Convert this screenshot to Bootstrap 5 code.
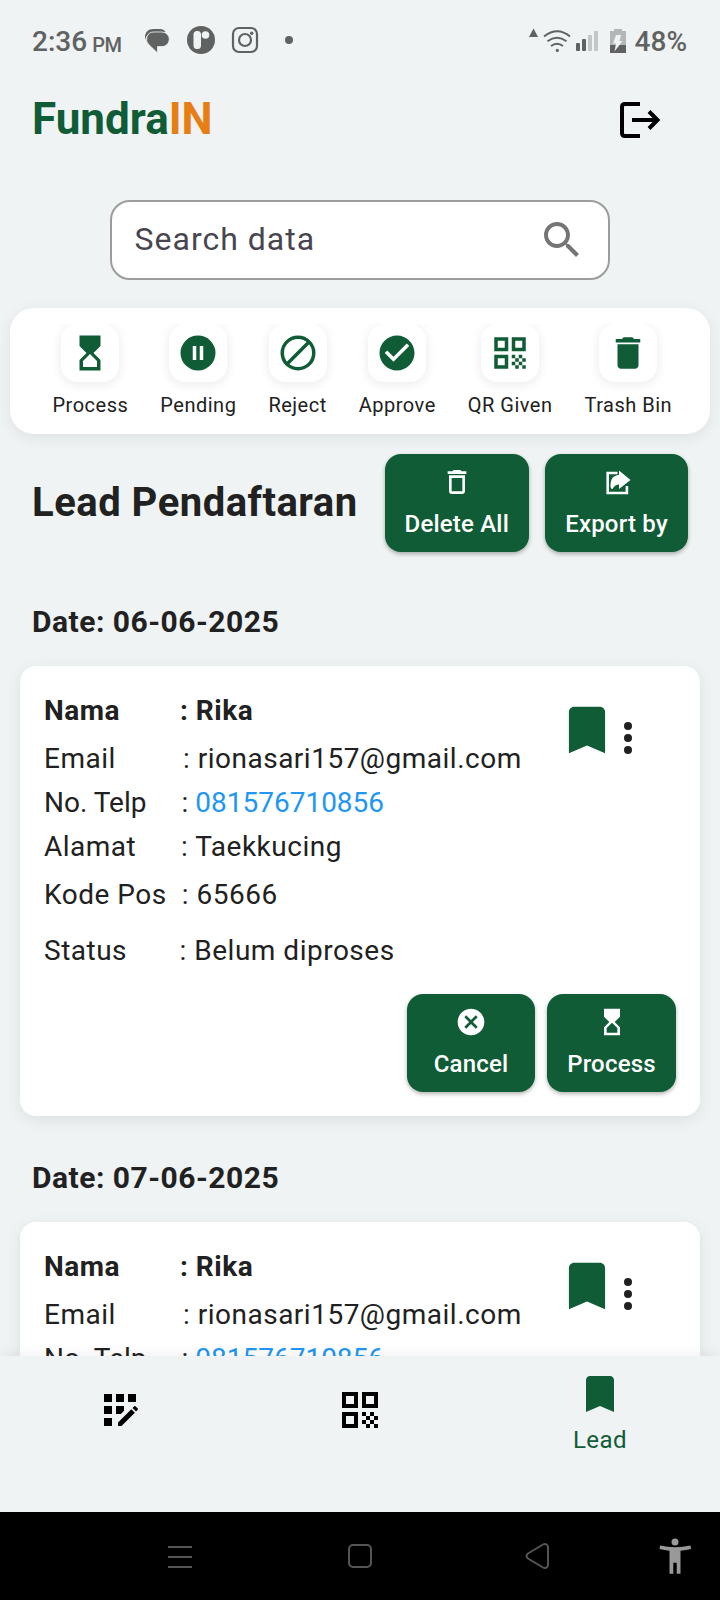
<!DOCTYPE html>
<html lang="id">
<head>
<meta charset="utf-8">
<meta name="viewport" content="width=device-width, initial-scale=1">
<title>FundraIN</title>
<link href="https://cdn.jsdelivr.net/npm/bootstrap@5.3.0/dist/css/bootstrap.min.css" rel="stylesheet">
<style>
  :root { --brand: #0f5c36; --page: #eff3f4; --ink: #212121; }
  body { width: 720px; height: 1600px; background: var(--page); color: var(--ink); font-family: Roboto, sans-serif; overflow: hidden; }
  svg { display: block; flex: none; }
  .phone-main { height: 1356px; }
  .status-line { height: 80px; padding: 2px 33px 0 32px; color: #606261; font-size: 28px; font-weight: 500; }
  .status-line span { padding-top: 2px; }
  .status-line .meridiem { font-size: 20px; margin-left: 5px; letter-spacing: -.3px; padding-top: 8px; }
  .app-head { height: 80px; padding: 0 56px 0 32px; }
  .brand-name { font-size: 44px; font-weight: 700; line-height: 78px; padding-bottom: 2px; color: var(--brand); }
  .brand-name span { color: #e67e14; }
  .search-box { width: 500px; height: 80px; margin: 40px auto 0; border: 2px solid #9b9c9c; border-radius: 20px; padding: 0 22px 0 22.5px; font-size: 32px; letter-spacing: 1px; color: #49454f; }
  .search-box span { padding-bottom: 2px; }
  .filter-bar { margin: 28px 10px 0; height: 126px; border-radius: 24px; padding-top: 16px; box-shadow: 0 4px 16px rgba(0,0,0,.07); }
  .filter-row { gap: 32px; padding-left: 42.5px; height: 110px; overflow: hidden; }
  .filter-row .tile { width: 58px; height: 58px; border-radius: 16px; box-shadow: 0 2px 12px rgba(0,0,0,.09); color: var(--brand); }
  .filter-row .tile-label { font-size: 20px; line-height: 30px; margin-top: 8px; letter-spacing: .5px; white-space: nowrap; }
  .title-row { margin: 20px 32px 0; height: 98px; }
  .title-row h1 { font-size: 40px; font-weight: 700; line-height: 98px; letter-spacing: .5px; white-space: nowrap; }
  .act { background: var(--brand); color: #fff; height: 98px; border: 0; border-radius: 16px; padding: 12px 0 14px; font-size: 24px; font-weight: 500; line-height: 28px; letter-spacing: .2px; box-shadow: 0 2px 4px rgba(0,0,0,.3); }
  .date-head { font-size: 30px; font-weight: 700; line-height: 40px; letter-spacing: .5px; margin: 0 32px 24px; }
  .lead-card { margin: 0 20px; height: 450px; padding: 25px 24px 24px; border-radius: 16px; box-shadow: 0 4px 16px rgba(0,0,0,.08); }
  .field { font-size: 28px; line-height: 40px; letter-spacing: .5px; white-space: nowrap; }
  .field dt { font-weight: inherit; width: 136px; flex: none; }
  .field dd { margin: 0; }
  .field a { color: #2196f3; text-decoration: none; }
  .field.phone { letter-spacing: 0; }
  .marks { margin: 8px 24px 0 0; }
  .card-actions { gap: 12px; margin-top: 23px; }
  .tab-bar { height: 156px; background: var(--page); color: #000; box-shadow: 0 -2px 12px rgba(0,0,0,.06); position: relative; }
  .tab-bar .tab { width: 240px; }
  .sys-bar { height: 88px; background: #000; }
</style>
</head>
<body>
<svg width="0" height="0" class="position-absolute">
  <defs>
    <symbol id="hourglass" viewBox="0 0 24 24"><path fill="currentColor" d="M18 22l-.01-6L14 12l3.990-4.010L18 2H6v6l4 4-4 3.990V22h12zM8 16.500l4-4 4 4V20H8v-3.500z"/></symbol>
    <symbol id="pause" viewBox="0 0 24 24"><path fill="currentColor" d="M12 2a10 10 0 100 20 10 10 0 000-20zm-1 14H9V8h2v8zm4 0h-2V8h2v8z"/></symbol>
    <symbol id="reject" viewBox="0 0 24 24"><g fill="none" stroke="currentColor" stroke-width="2"><circle cx="12" cy="12" r="9"/><path d="M5.600 18.400L18.400 5.600"/></g></symbol>
    <symbol id="check" viewBox="0 0 24 24"><path fill="currentColor" d="M12 2C6.480 2 2 6.480 2 12s4.480 10 10 10 10-4.480 10-10S17.520 2 12 2zm-2 15l-5-5 1.410-1.410L10 14.170l7.590-7.590L19 8l-9 9z"/></symbol>
    <symbol id="qr" viewBox="0 0 24 24"><path fill="currentColor" d="M3 11h8V3H3v8zm2-6h4v4H5V5zM3 21h8v-8H3v8zm2-6h4v4H5v-4zM13 3v8h8V3h-8zm6 6h-4V5h4v4zM19 19h2v2h-2zM13 13h2v2h-2zM15 15h2v2h-2zM13 17h2v2h-2zM15 19h2v2h-2zM17 17h2v2h-2zM17 13h2v2h-2zM19 15h2v2h-2z"/></symbol>
    <symbol id="trash" viewBox="0 0 24 24"><path fill="currentColor" d="M6 19c0 1.100.9 2 2 2h8c1.100 0 2-.9 2-2V7H6v12zM19 4h-3.500l-1-1h-5l-1 1H5v2h14V4z"/></symbol>
    <symbol id="trash-line" viewBox="0 0 24 24"><path fill="currentColor" d="M6 19c0 1.100.9 2 2 2h8c1.100 0 2-.9 2-2V7H6v12zM8 9h8v10H8V9zm7.500-5l-1-1h-5l-1 1H5v2h14V4h-3.500z"/></symbol>
    <symbol id="cancel" viewBox="0 0 24 24"><path fill="currentColor" d="M12 2C6.470 2 2 6.470 2 12s4.470 10 10 10 10-4.470 10-10S17.530 2 12 2zm5 13.590L15.590 17 12 13.410 8.410 17 7 15.590 10.590 12 7 8.410 8.410 7 12 10.590 15.590 7 17 8.410 13.410 12 17 15.590z"/></symbol>
    <symbol id="bookmark" viewBox="0 0 24 24"><path fill="currentColor" d="M17 3H7c-1.100 0-2 .9-2 2v16l7-3 7 3V5c0-1.100-.9-2-2-2z"/></symbol>
    <symbol id="dots" viewBox="0 0 24 24"><g fill="currentColor"><circle cx="12" cy="6" r="2"/><circle cx="12" cy="12" r="2"/><circle cx="12" cy="18" r="2"/></g></symbol>
  </defs>
</svg>

<main class="phone-main overflow-hidden">
  <div class="status-line d-flex align-items-center">
    <span>2:36</span><span class="meridiem">PM</span>
    <svg width="152" height="30" viewBox="0 0 152 30" style="margin-left:23.500px">
      <path fill="#606261" d="M0 14V11C0 6 3.500 3 8 3h7c2.500 0 4.500 1 5.500 3H10c-5 0-8.500 2.500-10 8z"/>
      <path fill="#606261" stroke="#eff3f4" stroke-width=".8" d="M9 6h8a7.300 7.300 0 0 1 0 14.600h-4.500V27L4 18.800A7.300 7.300 0 0 1 9 6z"/>
      <circle cx="56" cy="14" r="14" fill="#606261"/>
      <rect x="48.500" y="5" width="7.500" height="18" rx="3.500" fill="#eff3f4"/><circle cx="60.500" cy="9" r="3.800" fill="#eff3f4"/>
      <g fill="none" stroke="#606261" stroke-width="2.200"><rect x="88" y="2" width="24" height="24" rx="6"/><circle cx="100" cy="14" r="6"/></g><circle cx="106.700" cy="7.300" r="1.700" fill="#606261"/>
      <circle cx="144" cy="14" r="4" fill="#606261"/>
    </svg>
    <svg class="ms-auto" width="100" height="28" viewBox="529 26 100 28">
      <path fill="#606261" d="M534.500 27.500l4.500 8.500h-9z"/>
      <g fill="none" stroke="#606261" stroke-width="2"><path d="M545 35.500q13.500-10.500 26 0"/><path d="M548.500 40.200q9.500-7 19 0"/><path d="M552 45q6-4.600 12 0"/></g><circle cx="558.300" cy="49.400" r="1.600" fill="#606261"/>
      <g fill="#606261"><rect x="577" y="42" width="4" height="8" rx="1"/><rect x="583" y="38" width="4" height="12" rx="1"/></g>
      <g fill="#c4c7c8"><rect x="589" y="34" width="4" height="16"/><rect x="595" y="30" width="4" height="20"/></g>
      <path fill="#b4b7b8" d="M615 28h8v2h4v14h-16V30h4z"/><path fill="#606261" d="M611 44h16v8h-16z"/><path fill="#eff3f4" d="M617 34h5l-1.500 6h3l-8 10.500 1.500-8h-3z"/>
    </svg>
    <span style="margin-left:7px">48%</span>
  </div>

  <header class="app-head d-flex justify-content-between align-items-center">
    <div class="brand-name">Fundra<span>IN</span></div>
    <svg width="48" height="48" viewBox="616 96 48 48" fill="none" stroke="#000" stroke-width="4"><path d="M640 104h-15q-3 0-3 3v26q0 3 3 3h15M632 120h25M649 111.500l8.500 8.500-8.500 8.500"/></svg>
  </header>

  <div class="search-box bg-white d-flex justify-content-between align-items-center">
    <span>Search data</span>
    <svg width="48" height="48" viewBox="0 0 24 24"><path fill="#757575" d="M15.500 14h-.79l-.28-.27C15.410 12.590 16 11.110 16 9.500 16 5.910 13.090 3 9.500 3S3 5.910 3 9.500 5.910 16 9.500 16c1.610 0 3.090-.59 4.230-1.570l.27.28v.79l5 4.990L20.490 19l-4.990-5zm-6 0C7.010 14 5 11.990 5 9.500S7.010 5 9.500 5 14 7.010 14 9.500 11.990 14 9.500 14z"/></svg>
  </div>

  <nav class="filter-bar bg-white">
    <div class="filter-row d-flex">
      <div class="d-flex flex-column align-items-center"><div class="tile bg-white d-flex align-items-center justify-content-center"><svg width="42" height="42"><use href="#hourglass"/></svg></div><div class="tile-label">Process</div></div>
      <div class="d-flex flex-column align-items-center"><div class="tile bg-white d-flex align-items-center justify-content-center"><svg width="42" height="42"><use href="#pause"/></svg></div><div class="tile-label">Pending</div></div>
      <div class="d-flex flex-column align-items-center"><div class="tile bg-white d-flex align-items-center justify-content-center"><svg width="42" height="42"><use href="#reject"/></svg></div><div class="tile-label">Reject</div></div>
      <div class="d-flex flex-column align-items-center"><div class="tile bg-white d-flex align-items-center justify-content-center"><svg width="42" height="42"><use href="#check"/></svg></div><div class="tile-label">Approve</div></div>
      <div class="d-flex flex-column align-items-center"><div class="tile bg-white d-flex align-items-center justify-content-center"><svg width="42" height="42"><use href="#qr"/></svg></div><div class="tile-label">QR Given</div></div>
      <div class="d-flex flex-column align-items-center"><div class="tile bg-white d-flex align-items-center justify-content-center"><svg width="42" height="42"><use href="#trash"/></svg></div><div class="tile-label">Trash Bin</div></div>
    </div>
  </nav>

  <section class="title-row d-flex justify-content-between">
    <h1 class="m-0">Lead Pendaftaran</h1>
    <div class="d-flex gap-3">
      <button class="act d-flex flex-column align-items-center justify-content-between" style="width:144.500px"><svg width="32" height="32"><use href="#trash-line"/></svg>Delete All</button>
      <button class="act d-flex flex-column align-items-center justify-content-between" style="width:143px"><svg width="32" height="32" viewBox="0 0 32 32"><path fill="none" stroke="#fff" stroke-width="2.600" d="M16.500 7H6.700v20h19.200V20"/><path fill="#fff" d="M18 4.500L29.500 14 18 23v-4.500c-2.500 0-4.500 1-6.500 4.500-1.500 0-2-1-2-3C9.500 13 12 9.500 18 9z"/></svg>Export by</button>
    </div>
  </section>

  <h2 class="date-head" style="margin-top:50px">Date: 06-06-2025</h2>
  <article class="lead-card bg-white">
    <div class="d-flex justify-content-between">
      <dl class="m-0">
        <div class="field d-flex fw-bold"><dt>Nama</dt><dd>: Rika</dd></div>
        <div class="field d-flex mt-2"><dt style="width:139px">Email</dt><dd>: rionasari157@gmail.com</dd></div>
        <div class="field phone d-flex mt-1"><dt style="width:137.500px">No. Telp</dt><dd>: <a href="#">081576710856</a></dd></div>
        <div class="field d-flex mt-1"><dt style="width:137px">Alamat</dt><dd>: Taekkucing</dd></div>
        <div class="field d-flex mt-2"><dt style="width:137.800px">Kode Pos</dt><dd>: 65666</dd></div>
        <div class="field d-flex mt-3"><dt style="width:135.600px">Status</dt><dd>: Belum diproses</dd></div>
      </dl>
      <div class="marks d-flex">
        <svg width="62" height="62" style="color:#0f5c36;margin-right:-14px"><use href="#bookmark"/></svg>
        <svg width="48" height="48" style="margin-top:15px"><use href="#dots"/></svg>
      </div>
    </div>
    <div class="card-actions d-flex justify-content-end">
      <button class="act d-flex flex-column align-items-center justify-content-between" style="width:128px"><svg width="32" height="32"><use href="#cancel"/></svg>Cancel</button>
      <button class="act d-flex flex-column align-items-center justify-content-between" style="width:129px"><svg width="32" height="32"><use href="#hourglass"/></svg>Process</button>
    </div>
  </article>

  <h2 class="date-head" style="margin-top:42px">Date: 07-06-2025</h2>
  <article class="lead-card bg-white">
    <div class="d-flex justify-content-between">
      <dl class="m-0">
        <div class="field d-flex fw-bold"><dt>Nama</dt><dd>: Rika</dd></div>
        <div class="field d-flex mt-2"><dt style="width:139px">Email</dt><dd>: rionasari157@gmail.com</dd></div>
        <div class="field phone d-flex mt-1"><dt style="width:137.500px">No. Telp</dt><dd>: <a href="#">081576710856</a></dd></div>
      </dl>
      <div class="marks d-flex">
        <svg width="62" height="62" style="color:#0f5c36;margin-right:-14px"><use href="#bookmark"/></svg>
        <svg width="48" height="48" style="margin-top:15px"><use href="#dots"/></svg>
      </div>
    </div>
  </article>
</main>

<nav class="tab-bar d-flex">
  <div class="tab d-flex justify-content-center" style="padding-top:30px"><svg width="48" height="48" viewBox="0 0 24 24"><path d="M10 4h4v4h-4zM4 16h4v4H4zM4 10h4v4H4zM4 4h4v4H4zM14 12.420V10h-4v4h2.420zM20.880 11.290l-1.170-1.170c-.16-.16-.42-.16-.58 0l-.88.880L20 12.750l.88-.88c.16-.16.16-.42 0-.58zM11 18.250V20h1.750l6.670-6.670-1.750-1.750zM16 4h4v4h-4z"/></svg></div>
  <div class="tab d-flex justify-content-center" style="padding-top:30px"><svg width="48" height="48"><use href="#qr"/></svg></div>
  <div class="tab d-flex flex-column align-items-center" style="padding-top:14px;color:#0f5c36"><svg width="48" height="48"><use href="#bookmark"/></svg><span style="font-size:24px;line-height:32px;letter-spacing:.5px;margin-top:6px">Lead</span></div>
</nav>
<footer class="sys-bar">
  <svg width="720" height="88" viewBox="0 1512 720 88" fill="none" stroke="#555" stroke-width="2">
    <path d="M168 1547h24M168 1557h24M168 1567h24"/>
    <rect x="349" y="1545" width="22" height="22" rx="4"/>
    <path d="M528 1553.500l15-9c2.500-1.500 5 0 5 3v17c0 3-2.500 4.500-5 3l-15-9q-3-2.500 0-5z"/>
    <g fill="#999" stroke="none"><circle cx="675" cy="1542" r="3.500"/><path d="M660 1545.500q15 3.500 30.500 0l.5 3.500q-5 1.200-10.500 1.800v23h-3.800v-11h-3.400v11h-3.800v-23q-5-.6-10-1.800z"/></g>
  </svg>
</footer>
<script src="https://cdn.jsdelivr.net/npm/bootstrap@5.3.0/dist/js/bootstrap.bundle.min.js"></script>
</body>
</html>
